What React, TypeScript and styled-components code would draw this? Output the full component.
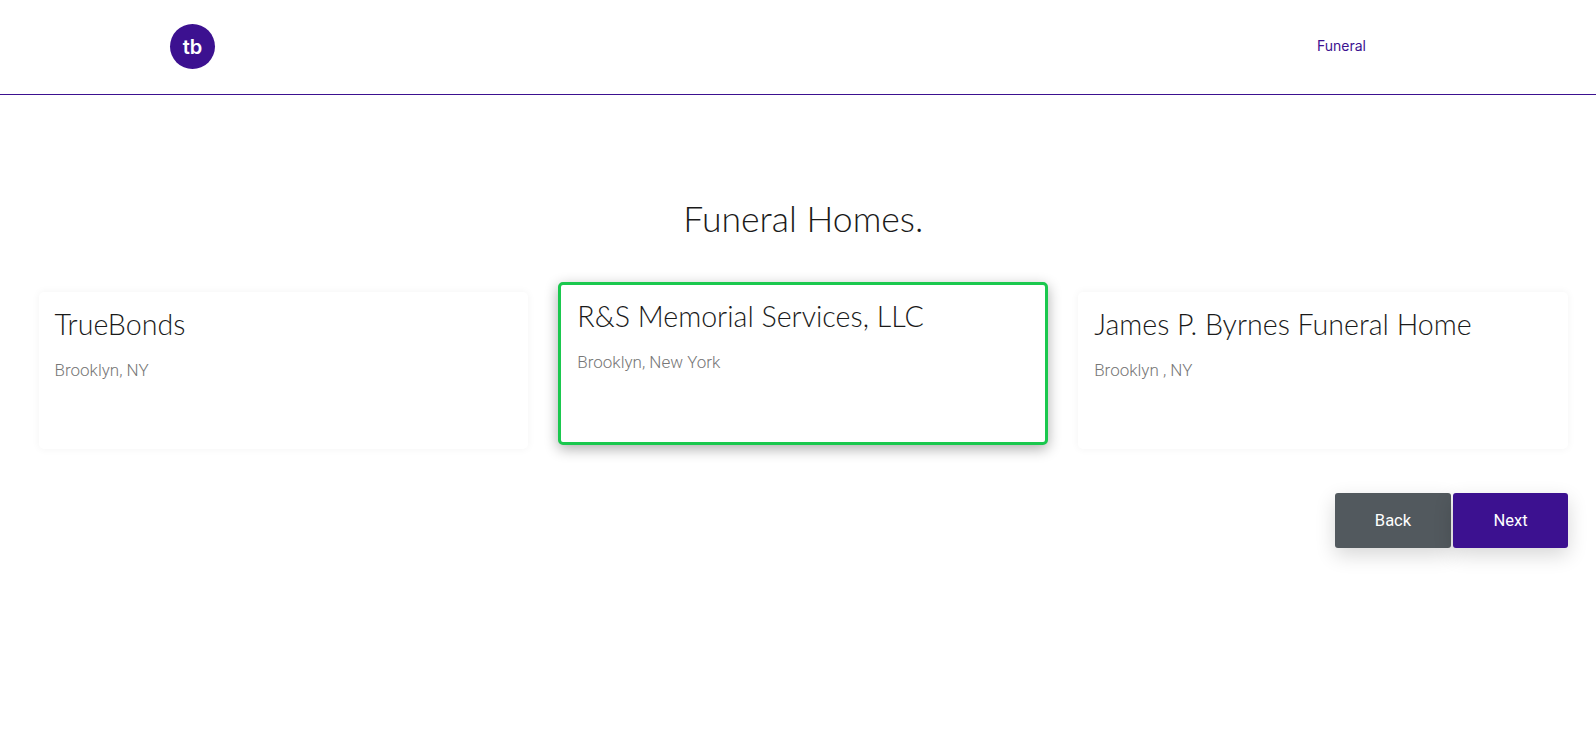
import React from "react";
import styled, { createGlobalStyle } from "styled-components";

const Global = createGlobalStyle`
  html, body { margin: 0; padding: 0; background: #fff; }
  body { font-family: "Roboto", "Liberation Sans", sans-serif; }
`;

const Page = styled.div`
  width: 1596px;
  height: 743px;
  overflow: hidden;
`;

const Header = styled.header`
  height: 94px;
  border-bottom: 1px solid #3c1190;
  display: flex;
  align-items: center;
  justify-content: space-between;
  padding: 0 230px 0 170px;
  box-sizing: content-box;
`;

const Logo = styled.div`
  width: 45px;
  height: 45px;
  border-radius: 50%;
  background: #3c1190;
  color: #fff;
  display: flex;
  align-items: center;
  justify-content: center;
  font-family: "Inter", sans-serif;
  font-weight: 600;
  font-size: 20px;
  margin-bottom: 1px;
`;

const NavLink = styled.a`
  color: #3c1190;
  font-family: "Inter", sans-serif;
  font-size: 14px;
  font-weight: 400;
  line-height: 16px;
  margin-bottom: 2px;
`;

const Main = styled.main`
  padding: 102px 28px 0 38.5px;
`;

const Title = styled.h1`
  margin: 0;
  text-align: center;
  font-family: "Lato", sans-serif;
  font-weight: 300;
  font-size: 35.6px;
  line-height: 44px;
  color: #1a1a1a;
`;

const Cards = styled.div`
  margin-top: 51px;
  display: grid;
  grid-template-columns: repeat(3, 1fr);
  column-gap: 30px;
  align-items: start;
`;

const Card = styled.div<{ $selected?: boolean }>`
  box-sizing: border-box;
  border-radius: 5px;
  background: #fff;
  padding: ${(p) => (p.$selected ? "14px 16px" : "15px 16px")};
  height: ${(p) => (p.$selected ? "163px" : "157px")};
  border: ${(p) => (p.$selected ? "3px solid #1ac84e" : "0")};
  box-shadow: ${(p) =>
    p.$selected ? "0 4px 14px rgba(0,0,0,.32)" : "0 0 8px rgba(0,0,0,.05)"};
  transform: ${(p) => (p.$selected ? "translateY(-10px)" : "none")};
`;

const CardTitle = styled.h3`
  margin: 0;
  font-family: "Lato", sans-serif;
  font-weight: 300;
  font-size: 28.6px;
  line-height: 34px;
  color: #1a1a1a;
`;

const CardText = styled.p`
  margin: 17px 0 0;
  font-family: "Roboto", sans-serif;
  font-weight: 300;
  font-size: 17px;
  line-height: 24px;
  color: #777;
`;

const Actions = styled.div`
  margin-top: 38px;
  display: flex;
  justify-content: flex-end;
  gap: 2px;
`;

const Button = styled.button<{ $bg: string; $w: number }>`
  width: ${(p) => p.$w}px;
  height: 55px;
  border: 0;
  border-radius: 3px;
  background: ${(p) => p.$bg};
  color: #fff;
  font-family: "Roboto", sans-serif;
  font-weight: 400;
  font-size: 16.5px;
  box-shadow: 0 7px 20px rgba(0,0,0,.16);
`;

const homes = [
  { name: "TrueBonds", place: "Brooklyn, NY" },
  { name: "R&S Memorial Services, LLC", place: "Brooklyn, New York", selected: true },
  { name: "James P. Byrnes Funeral Home", place: "Brooklyn , NY" },
];

export default function App() {
  return (
    <Page>
      <Global />
      <Header>
        <Logo>tb</Logo>
        <NavLink>Funeral</NavLink>
      </Header>
      <Main>
        <Title>Funeral Homes.</Title>
        <Cards>
          {homes.map((h) => (
            <Card key={h.name} $selected={h.selected}>
              <CardTitle>{h.name}</CardTitle>
              <CardText>{h.place}</CardText>
            </Card>
          ))}
        </Cards>
        <Actions>
          <Button $bg="#52595e" $w={116}>Back</Button>
          <Button $bg="#3c1190" $w={115}>Next</Button>
        </Actions>
      </Main>
    </Page>
  );
}
